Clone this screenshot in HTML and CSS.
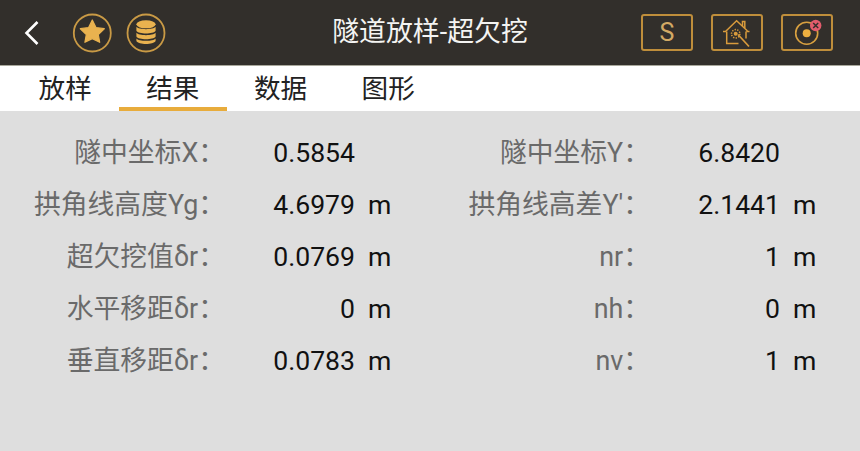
FILE: index.html
```html
<!DOCTYPE html>
<html lang="zh-CN">
<head>
<meta charset="utf-8">
<title>隧道放样-超欠挖</title>
<link rel="stylesheet" href="styles.css">
</head>
<body>
<header class="topbar">
  <div class="left-tools">
    <svg class="back" width="16" height="26" viewBox="0 0 16 26"><path d="M13.5 2 L2.5 13 L13.5 24" fill="none" stroke="#fff" stroke-width="2.6"/></svg>
    <svg class="round first" width="40" height="40" viewBox="0 0 40 40"><circle cx="20.300" cy="20" r="18.500" fill="none" stroke="#c99a45" stroke-width="1.800"/><path d="M20.300 7 L24 14.500 L32.300 15.700 L26.300 21.500 L27.700 29.300 L20.300 25.600 L12.900 29.300 L14.300 21.500 L8.300 15.700 L16.600 14.500 Z" fill="#e9b24f" stroke="#e9b24f" stroke-width="1.200" stroke-linejoin="round"/></svg>
    <svg class="round" width="40" height="40" viewBox="0 0 40 40"><circle cx="20" cy="20" r="18.500" fill="none" stroke="#c99a45" stroke-width="1.800"/><g fill="#e9b24f"><ellipse cx="20" cy="11.300" rx="9.600" ry="4"/><path d="M10.400 13.800 C12.500 17 27.500 17 29.600 13.800 V17.800 C27.500 21.400 12.500 21.400 10.400 17.800 Z"/><path d="M10.400 19.800 C12.500 23 27.500 23 29.600 19.800 V23.600 C27.500 27.200 12.500 27.200 10.400 23.600 Z"/><path d="M10.400 25.400 C12.500 28.600 27.500 28.600 29.600 25.400 V28 C27.500 32 12.500 32 10.400 28 Z"/></g></svg>
  </div>
  <h1 class="title">隧道放样-超欠挖</h1>
  <div class="right-tools">
    <div class="tool"><span class="tool-s">S</span></div>
    <div class="tool">
      <svg width="30" height="30" viewBox="0 0 30 30"><g fill="none" stroke="#d99b3c" stroke-width="1.500"><path d="M1 13.500 H3.500 L14.600 2.800 L25 12.500 V13.500 H27.500"/><path d="M4.700 13.500 V25.500 H16.500"/><path d="M24 13.500 V20.500"/><path d="M20.500 8 V3.500 H22.800 V10"/><path d="M16 16.500 L27 28.500" stroke-width="1.700"/></g><circle cx="13.700" cy="15.800" r="2" fill="#d99b3c"/><circle cx="13.700" cy="15.800" r="4.200" fill="none" stroke="#d99b3c" stroke-width="1.500" stroke-dasharray="1.300 1.300"/></svg>
    </div>
    <div class="tool">
      <svg width="40" height="36" viewBox="0 0 40 36"><circle cx="19.700" cy="18.200" r="11" fill="none" stroke="#d8a040" stroke-width="1.600"/><circle cx="19.700" cy="18.200" r="4" fill="#eeb040"/><circle cx="28.700" cy="10.500" r="5.700" fill="#e25c6c"/><path d="M26.200 8 L31.200 13 M31.200 8 L26.200 13" stroke="#332f2c" stroke-width="1.500"/></svg>
    </div>
  </div>
</header>
<nav class="tabs">
  <div class="tab">放样</div>
  <div class="tab active">结果</div>
  <div class="tab">数据</div>
  <div class="tab">图形</div>
</nav>
<main class="results">
  <div class="label">隧中坐标X：</div><div class="value">0.5854</div><div class="unit"></div>
  <div class="label">隧中坐标Y：</div><div class="value">6.8420</div><div class="unit"></div>
  <div class="label">拱角线高度Yg：</div><div class="value">4.6979</div><div class="unit">m</div>
  <div class="label">拱角线高差Y'：</div><div class="value">2.1441</div><div class="unit">m</div>
  <div class="label">超欠挖值δr：</div><div class="value">0.0769</div><div class="unit">m</div>
  <div class="label">nr：</div><div class="value">1</div><div class="unit">m</div>
  <div class="label">水平移距δr：</div><div class="value">0</div><div class="unit">m</div>
  <div class="label">nh：</div><div class="value">0</div><div class="unit">m</div>
  <div class="label">垂直移距δr：</div><div class="value">0.0783</div><div class="unit">m</div>
  <div class="label">nv：</div><div class="value">1</div><div class="unit">m</div>
</main>
</body>
</html>
```
FILE: styles.css
```css
* { box-sizing: border-box; margin: 0; padding: 0; }
html, body { width: 860px; height: 451px; overflow: hidden; }
body {
  display: flex;
  flex-direction: column;
  background: #dedede;
  font-family: Roboto, "Noto Sans CJK SC", sans-serif;
  font-size: 26.6px;
}
.topbar {
  position: relative;
  height: 66px;
  flex: none;
  display: flex;
  align-items: center;
  justify-content: space-between;
  background: #322f2b;
  border-bottom: 1px solid #a9a89c;
}
.left-tools { display: flex; align-items: center; padding-left: 24px; }
.back { display: block; }
.round { display: block; margin-left: 14px; }
.round.first { margin-left: 32px; }
.title {
  position: absolute;
  left: 0;
  right: 0;
  top: 0;
  height: 65px;
  line-height: 65px;
  text-align: center;
  font-size: 26.9px;
  font-weight: 400;
  color: #f4f4f2;
}
.right-tools { display: flex; gap: 18px; padding-right: 27px; }
.tool {
  width: 52px;
  height: 37px;
  display: flex;
  align-items: center;
  justify-content: center;
  border: 2px solid #bf8e3b;
  border-radius: 3px;
}
.tool-s { font-size: 25px; color: #d2a964; line-height: 1; }
.tabs {
  flex: none;
  height: 45px;
  display: flex;
  padding-left: 11.3px;
  background: #fff;
}
.tab {
  width: 107.7px;
  height: 45px;
  line-height: 45px;
  text-align: center;
  color: #222;
}
.tab.active { border-bottom: 4px solid #e8ac3c; }
.results {
  display: grid;
  grid-template-columns: 225px 130px 70px 225px 130px 70px;
  grid-auto-rows: 52px;
  padding-top: 16px;
}
.label, .value, .unit { line-height: 52px; white-space: nowrap; }
.label { text-align: right; color: #6a6a6a; font-size: 26.8px; }
.value { text-align: right; color: #111; }
.unit { padding-left: 13px; color: #111; }
```
